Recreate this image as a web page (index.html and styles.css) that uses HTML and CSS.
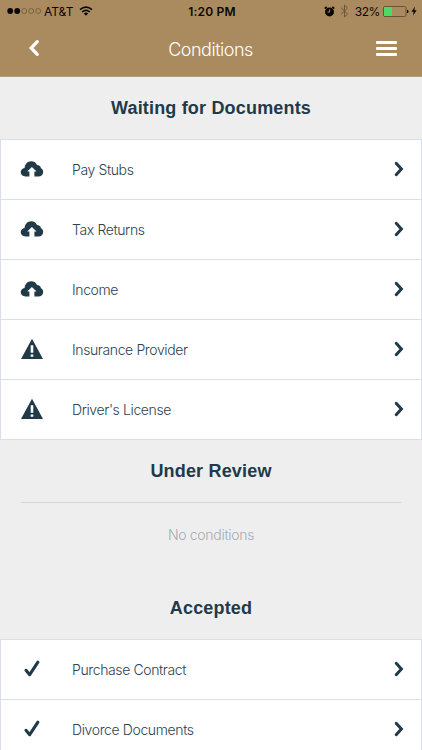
FILE: index.html
```html
<!DOCTYPE html>
<html lang="en">
<head>
    <meta charset="UTF-8">
    <meta name="viewport" content="width=device-width, initial-scale=1.0">
    <title>Conditions</title>
    <link rel="stylesheet" href="styles.css">
</head>
<body>
    <!-- Shared icons -->
    <svg class="icon-defs" aria-hidden="true">
        <symbol id="icon-upload" viewBox="0 0 24 16">
            <path fill-rule="evenodd" d="M5.600 15.500C2.600 15.500.7 13.600.7 11.100c0-2.200 1.500-3.900 3.900-4.200C4.800 3.200 7.500.3 11.200.3c2.900 0 5 1.500 5.800 3.800 2.200 0 3.800 1.300 3.900 3.100 1.500.6 2.300 2 2.300 3.700 0 2.700-2 4.600-4.800 4.600h-4v-5h2.200L11.900 6 7.200 10.500h2.200v5z"/>
        </symbol>
        <symbol id="icon-warning" viewBox="0 0 24 22">
            <path fill-rule="evenodd" d="M12 .8 23 21H1zM10.700 7.300v7.500h2.600V7.300zM10.700 16.400v2.400h2.600v-2.400z"/>
        </symbol>
        <symbol id="icon-check" viewBox="0 0 18 18">
            <path d="M3 10.300 6.700 14.700 14.900 2.200" fill="none" stroke="currentColor" stroke-width="3.100" stroke-linecap="round" stroke-linejoin="round"/>
        </symbol>
        <symbol id="icon-chevron" viewBox="0 0 10 16">
            <path d="M2.200 2.300 7.400 8 2.200 13.700" fill="none" stroke="currentColor" stroke-width="3" stroke-linecap="round" stroke-linejoin="miter"/>
        </symbol>
    </svg>

    <header class="header">
        <!-- Status bar -->
        <div class="status-bar">
            <div class="status-left">
                <svg class="signal" viewBox="0 0 36 8">
                    <circle cx="3.200" cy="4" r="2.900"/>
                    <circle cx="10.200" cy="4" r="2.900"/>
                    <g class="signal-off">
                        <circle cx="17.200" cy="4" r="2.500"/>
                        <circle cx="24.200" cy="4" r="2.500"/>
                        <circle cx="31.200" cy="4" r="2.500"/>
                    </g>
                </svg>
                <span class="carrier">AT&amp;T</span>
                <svg class="wifi" viewBox="0 0 14 10">
                    <path d="M1 3.700q6-5 12 0M3.100 6q3.900-3.200 7.800 0" fill="none" stroke="currentColor" stroke-width="1.600"/>
                    <path d="M4.800 7.400q2.200-1.600 4.400 0L7 9.700z"/>
                </svg>
            </div>
            <span class="clock">1:20 PM</span>
            <div class="status-right">
                <svg class="alarm" viewBox="0 0 11 11">
                    <circle cx="5.500" cy="5.900" r="4.500"/>
                    <path d="M.8 2.700 2.700.9M8.300.9l1.900 1.800" stroke="currentColor" stroke-width="1.700"/>
                    <path d="M5.600 3.400v2.700H3.500" fill="none" stroke="#aa8b5f" stroke-width="1"/>
                </svg>
                <svg class="bluetooth" viewBox="0 0 9 14">
                    <path d="M1 3.700 7.600 10 4.500 13V1l3.100 3L1 10.300" fill="none" stroke="currentColor" stroke-width="1"/>
                </svg>
                <span class="percent">32%</span>
                <svg class="battery" viewBox="0 0 26 11">
                    <rect x=".5" y=".5" width="22.500" height="10" rx="1.500" fill="none" stroke="#665338"/>
                    <rect x="1" y="1" width="8" height="9" fill="#4cd964"/>
                    <path d="M24 3.700q1.500.3 1.500 1.800T24 7.300z"/>
                </svg>
                <svg class="bolt" viewBox="0 0 6 10">
                    <path d="M4 .5.500 5.700h2.200L2 9.500l3.700-5.300H3.300z"/>
                </svg>
            </div>
        </div>

        <!-- Navigation -->
        <nav class="nav">
            <button class="nav-btn" aria-label="Back">
                <svg class="back-icon" viewBox="0 0 12 18"><path d="M9.300 2.700 3.200 9l6.100 6.300" fill="none" stroke="currentColor" stroke-width="3.300" stroke-linecap="round"/></svg>
            </button>
            <h1 class="nav-title">Conditions</h1>
            <button class="nav-btn" aria-label="Menu">
                <span class="menu-icon"><i></i><i></i><i></i></span>
            </button>
        </nav>
    </header>

    <main>
        <h2 class="section-title">Waiting for Documents</h2>
        <ul class="list">
            <li class="row"><svg class="icon-cloud"><use href="#icon-upload"/></svg><span class="label">Pay Stubs</span><svg class="chevron"><use href="#icon-chevron"/></svg></li>
            <li class="row"><svg class="icon-cloud"><use href="#icon-upload"/></svg><span class="label">Tax Returns</span><svg class="chevron"><use href="#icon-chevron"/></svg></li>
            <li class="row"><svg class="icon-cloud"><use href="#icon-upload"/></svg><span class="label">Income</span><svg class="chevron"><use href="#icon-chevron"/></svg></li>
            <li class="row"><svg class="icon-alert"><use href="#icon-warning"/></svg><span class="label">Insurance Provider</span><svg class="chevron"><use href="#icon-chevron"/></svg></li>
            <li class="row"><svg class="icon-alert"><use href="#icon-warning"/></svg><span class="label">Driver's License</span><svg class="chevron"><use href="#icon-chevron"/></svg></li>
        </ul>

        <h2 class="section-title">Under Review</h2>
        <p class="empty">No conditions</p>

        <h2 class="section-title">Accepted</h2>
        <ul class="list">
            <li class="row"><svg class="icon-check"><use href="#icon-check"/></svg><span class="label">Purchase Contract</span><svg class="chevron"><use href="#icon-chevron"/></svg></li>
            <li class="row"><svg class="icon-check"><use href="#icon-check"/></svg><span class="label">Divorce Documents</span><svg class="chevron"><use href="#icon-chevron"/></svg></li>
        </ul>
    </main>
</body>
</html>
```
FILE: styles.css
```css
* {
    box-sizing: border-box;
}
body {
    margin: 0;
    height: 750px;
    overflow: hidden;
    background: #eee;
    color: #213a48;
    font-family: Inter, "Liberation Sans", sans-serif;
}
svg {
    display: block;
    flex: none;
    fill: currentColor;
}
.icon-defs {
    display: none;
}

/* Header */
.header {
    height: 77px;
    background: #aa8b5f;
    border-bottom: 1px solid #b79d78;
}
.status-bar {
    display: grid;
    grid-template-columns: 1fr auto 1fr;
    align-items: center;
    height: 22px;
    padding: 0 5px 0 7px;
    color: #090704;
    font-size: 12px;
}
.status-left,
.status-right {
    display: flex;
    align-items: center;
}
.status-right {
    justify-content: flex-end;
}
.signal {
    width: 36px;
    height: 8px;
}
.signal-off {
    fill: none;
    stroke: #67543a;
    stroke-width: 0.7;
}
.carrier {
    margin-left: 1px;
}
.wifi {
    width: 14px;
    height: 10px;
    margin-left: 6px;
}
.clock {
    font-weight: 600;
    letter-spacing: 0.2px;
}
.alarm {
    width: 11px;
    height: 11px;
}
.bluetooth {
    width: 9px;
    height: 14px;
    margin-left: 5px;
    color: #6c5739;
}
.percent {
    margin-left: 6px;
    letter-spacing: -0.4px;
}
.battery {
    width: 26px;
    height: 11px;
    margin-left: 3px;
}
.bolt {
    width: 6px;
    height: 10px;
    margin-left: 2px;
}
.nav {
    display: flex;
    align-items: center;
    justify-content: space-between;
    height: 54px;
    padding: 0 25px 0 28px;
    color: #fff;
}
.nav-btn {
    display: flex;
    width: 21px;
    padding: 0;
    border: 0;
    background: none;
    color: inherit;
}
.back-icon {
    width: 12px;
    height: 18px;
    margin-bottom: 2px;
}
.nav-title {
    margin: 0 4px 0 0;
    font-size: 18px;
    font-weight: 300;
    letter-spacing: -0.5px;
}
.menu-icon {
    display: flex;
    flex-direction: column;
    gap: 3px;
    margin-bottom: 2px;
}
.menu-icon i {
    width: 21px;
    height: 3px;
    border-radius: 1px;
    background: #fff;
}

/* Sections */
.section-title {
    height: 62px;
    margin: 0;
    font: bold 18px/62px "Liberation Sans", Arial, sans-serif;
    letter-spacing: 0.18px;
    text-align: center;
}
.list {
    margin: 0;
    padding: 0;
    border: solid #d7e0ea;
    border-width: 1px 1px 0;
    list-style: none;
}
.row {
    display: flex;
    align-items: center;
    height: 60px;
    padding: 0 17px 0 19px;
    border-bottom: 1px solid #d7e0ea;
    background: #fff;
}
.icon-cloud {
    width: 24px;
    height: 16px;
    margin-bottom: 2px;
}
.icon-alert {
    width: 24px;
    height: 22px;
    margin-bottom: 2px;
}
.icon-check {
    width: 18px;
    height: 18px;
    margin: 0 3px 1px;
}
.label {
    flex: 1;
    margin-left: 28px;
    color: #2b4250;
    font-size: 14px;
    font-weight: 300;
    letter-spacing: -0.38px;
}
.chevron {
    width: 10px;
    height: 16px;
    margin-bottom: 2px;
}
.empty {
    height: 75px;
    margin: 0 21px;
    border-top: 1px solid #d4d6d7;
    color: #a5acb1;
    font-size: 14px;
    font-weight: 300;
    letter-spacing: -0.3px;
    line-height: 64px;
    text-align: center;
}
```
